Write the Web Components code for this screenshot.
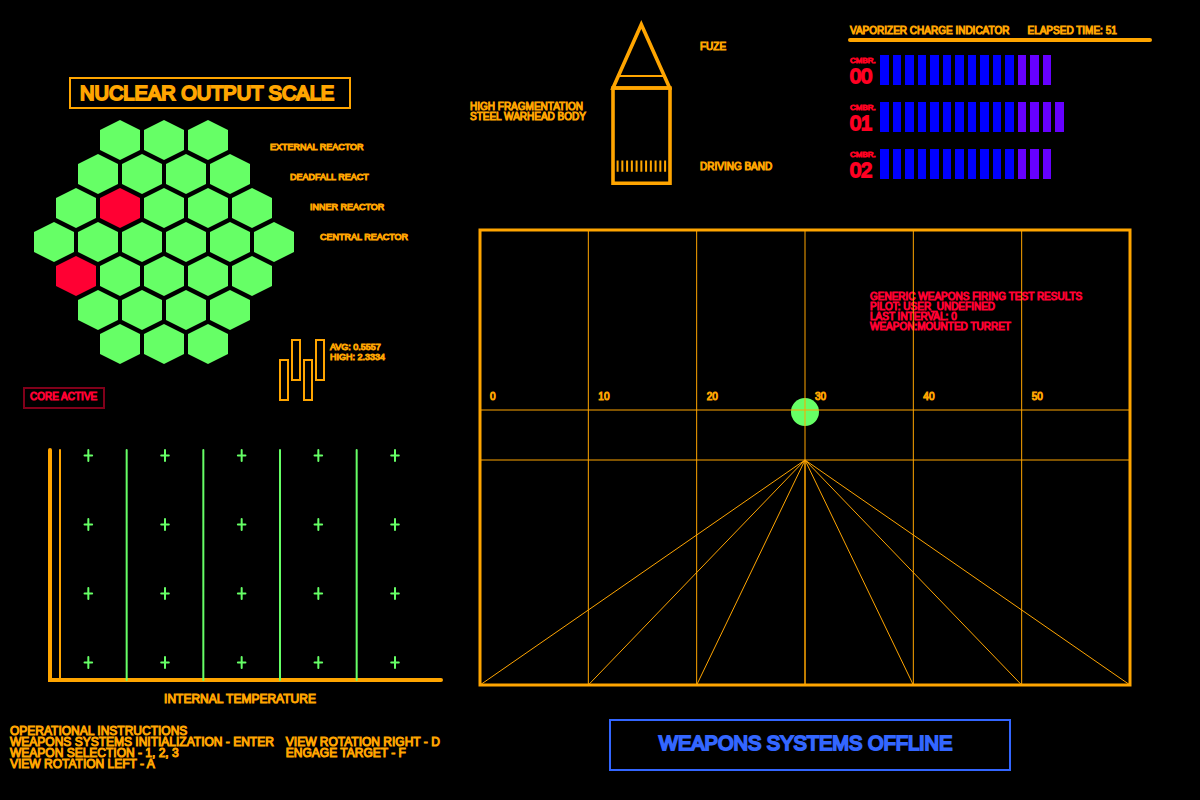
<!DOCTYPE html>
<html lang="en">
<head>
<meta charset="utf-8">
<title>Weapons Console</title>
<style>
  body { margin: 0; background: #000; }
</style>
</head>
<body>
<weapons-console></weapons-console>
<script>
const amber = '#ffa500', green = '#66ff66', red = '#ff0033', blue = '#3366ff';

function define(name, html, setup) {
  const template = document.createElement('template');
  template.innerHTML = html;
  customElements.define(name, class extends HTMLElement {
    constructor() {
      super();
      this.attachShadow({ mode: 'open' }).append(template.content.cloneNode(true));
    }
    connectedCallback() {
      if (setup && !this.ready) { this.ready = true; setup(this, this.shadowRoot); }
    }
  });
}

define('framed-title', `
  <style>
    :host { display: block; box-sizing: border-box; border: 2px solid currentColor; -webkit-text-stroke: 2px currentColor; }
    ::slotted(*) { margin: 0; font-size: 20px; line-height: 24px; font-weight: normal; }
  </style>
  <slot></slot>`);

define('reactor-cells', `
  <style>
    :host { display: flex; flex-direction: column; align-items: center; }
    .row { display: flex; gap: 4px; }
    .row + .row { margin-top: -6px; }
    i { width: 40px; height: 40px; background: ${green};
        clip-path: polygon(50% 0, 100% 25%, 100% 75%, 50% 100%, 0 75%, 0 25%); }
    i.hot { background: ${red}; }
  </style>`, (host, root) => {
  const hot = host.getAttribute('hot').split(' ');
  [3, 4, 5, 6, 5, 4, 3].forEach((count, r) => {
    const row = document.createElement('div');
    row.className = 'row';
    for (let c = 0; c < count; c++) {
      const cell = document.createElement('i');
      if (hot.includes(r + '-' + c)) cell.className = 'hot';
      row.append(cell);
    }
    root.append(row);
  });
});

define('level-bars', `
  <style>
    :host { display: flex; gap: 2px; }
    i { box-sizing: border-box; width: 10px; height: 42px; border: 2px solid ${amber}; }
    i:nth-of-type(odd) { margin-top: 20px; }
  </style>
  <i></i><i></i><i></i><i></i>`);

define('reactor-panel', `
  <style>
    :host { display: block; color: ${amber}; }
    framed-title { width: 282px; margin-left: 69px; padding: 2px 9px; }
    .map { display: flex; margin: 11px 0 0 34px; }
    ul { list-style: none; margin: 12px 0 0 -24px; padding: 0; font-size: 9px; line-height: 30px; z-index: 1; }
    li:nth-child(2) { padding-left: 20px; }
    li:nth-child(3) { padding-left: 40px; }
    li:nth-child(4) { padding-left: 50px; }
    .foot { display: flex; justify-content: space-between; align-items: flex-end; margin: -25px 50px 0 23px; }
    .core { box-sizing: border-box; width: 82px; height: 22px; padding-left: 5px; margin-bottom: -8px;
            border: 2px solid #80001a; color: ${red}; font-size: 10px; line-height: 16px; }
    .levels { display: flex; gap: 5px; width: 121px; font-size: 9px; line-height: 10px; }
    .levels p { margin: 3px 0 0; white-space: nowrap; }
  </style>
  <framed-title><h1>NUCLEAR OUTPUT SCALE</h1></framed-title>
  <div class="map">
    <reactor-cells hot="2-1 4-0"></reactor-cells>
    <ul><li>EXTERNAL REACTOR</li><li>DEADFALL REACT</li><li>INNER REACTOR</li><li>CENTRAL REACTOR</li></ul>
  </div>
  <div class="foot">
    <div class="core">CORE ACTIVE</div>
    <div class="levels"><level-bars></level-bars><p>AVG: 0.5557<br>HIGH: 2.3334</p></div>
  </div>`);

define('temperature-chart', `
  <style>
    :host { display: block; color: ${amber}; }
    svg { display: block; width: 100%; }
    h2 { margin: 9px 12px 0 0; text-align: center; font-size: 12px; line-height: 16px; font-weight: normal; }
  </style>
  <svg viewBox="0 0 400 236" fill="none" stroke-linecap="round" aria-hidden="true">
    <g stroke="${amber}"><path d="M4 4V234H395" stroke-width="4"/><path d="M14 4V234" stroke-width="2"/></g>
    <g id="grid" stroke="${green}" stroke-width="2"></g>
  </svg>
  <h2>INTERNAL TEMPERATURE</h2>`, (host, root) => {
  const step = 230 / 3;
  let d = '';
  for (let c = 0; c < 5; c++) {
    if (c) d += `M${4 + c * step} 4V234`;
    for (let r = 0; r < 4; r++) {
      const x = 4 + (c + .5) * step, y = 9.6 + r * 69;
      d += `M${x} ${y - 5.5}v11M${x - 3.8} ${y}h7.6`;
    }
  }
  root.getElementById('grid').innerHTML = `<path d="${d}"/>`;
});

define('operator-help', `
  <style>
    :host { display: block; color: ${amber}; font-size: 12px; line-height: 11px; white-space: nowrap; }
    h2 { margin: 0; font: inherit; }
    div { display: flex; gap: 12px; }
    p { margin: 0; }
  </style>
  <h2>OPERATIONAL INSTRUCTIONS</h2>
  <div>
    <p>WEAPONS SYSTEMS INITIALIZATION - ENTER<br>WEAPON SELECTION - 1, 2, 3<br>VIEW ROTATION LEFT - A</p>
    <p>VIEW ROTATION RIGHT - D<br>ENGAGE TARGET - F</p>
  </div>`);

define('warhead-diagram', `
  <style>
    :host { display: flex; color: ${amber}; font-size: 10px; line-height: 10px; white-space: nowrap; }
    p { margin: 0; }
    .body { width: 140px; padding-top: 82px; }
    svg { display: block; width: 62px; height: 166px; }
    .right { display: flex; flex-direction: column; gap: 110px; padding: 22px 0 0 28px; }
  </style>
  <p class="body">HIGH FRAGMENTATION<br>STEEL WARHEAD BODY</p>
  <svg viewBox="610 20 62 166" fill="none" stroke="${amber}" aria-hidden="true">
    <path d="M613 88H670V183.300H613Z" stroke-width="3.600"/>
    <path d="M613 88L641.300 24.500L669.700 88Z" stroke-width="3.600"/>
    <path d="M619 76H664" stroke-width="2"/>
    <path id="ticks" stroke-width="2"/>
  </svg>
  <div class="right"><p>FUZE</p><p>DRIVING BAND</p></div>`, (host, root) => {
  let d = '';
  for (let i = 0; i < 11; i++) d += `M${617.6 + i * 4.75} 160.500V171.800`;
  root.getElementById('ticks').setAttribute('d', d);
});

define('charge-row', `
  <style>
    :host { display: flex; color: #ff0022; }
    .name { width: 30px; padding-left: 2px; }
    small { display: block; font-size: 8px; line-height: 12px; }
    b { display: block; font-size: 20px; line-height: 18px; font-weight: normal; -webkit-text-stroke-width: 2px; }
    .bars { flex: 1; display: grid; grid-template-columns: repeat(24, 1fr); gap: 4px; height: 30px; }
    i { background: #0000ff; }
    i:nth-child(n+12) { background: #6600ff; }
  </style>
  <div class="name"><small>CMBR.</small><b><slot></slot></b></div>
  <div class="bars"></div>`, (host, root) => {
  root.querySelector('.bars').innerHTML = '<i></i>'.repeat(+host.getAttribute('charge'));
});

define('charge-panel', `
  <style>
    :host { display: block; }
    header { display: flex; gap: 18px; padding: 0 0 2px 2px; color: ${amber}; font-size: 10px; line-height: 10px; white-space: nowrap; }
    h2, p { margin: 0; font: inherit; }
    hr { width: 304px; height: 4px; margin: 0; border: 0; border-radius: 2px; background: ${amber}; }
    .rows { display: flex; flex-direction: column; gap: 17px; margin: 13px 0 0; }
  </style>
  <header><h2>VAPORIZER CHARGE INDICATOR</h2><p>ELAPSED TIME: 51</p></header>
  <hr>
  <div class="rows">
    <charge-row charge="14">00</charge-row>
    <charge-row charge="15">01</charge-row>
    <charge-row charge="14">02</charge-row>
  </div>`);

define('firing-view', `
  <style>
    :host { display: grid; color: ${amber}; font-size: 10px; line-height: 10px; }
    svg, .text { grid-area: 1 / 1; }
    svg { display: block; width: 100%; overflow: visible; z-index: 1; }
    .text { padding: 64px 2px 0; z-index: 0; }
    .report { margin: 0 0 60px 60%; color: ${red}; white-space: nowrap; }
    .scale { display: grid; grid-template-columns: repeat(6, 1fr); }
    .scale span { padding-left: 10px; }
  </style>
  <div class="text">
    <p class="report">GENERIC WEAPONS FIRING TEST RESULTS<br>PILOT: USER_UNDEFINED<br>LAST INTERVAL: 0<br>WEAPON:MOUNTED TURRET</p>
    <div class="scale"><span>0</span><span>10</span><span>20</span><span>30</span><span>40</span><span>50</span></div>
  </div>
  <svg viewBox="478 228 654 459" fill="none" stroke="${amber}" aria-hidden="true">
    <circle cx="805" cy="412" r="14" fill="${green}" stroke="none"/>
    <rect x="480" y="230" width="650" height="455" stroke-width="3"/>
    <path d="M480 410H1130M480 460H1130"/>
    <g id="lines"></g>
  </svg>`, (host, root) => {
  let s = '';
  for (let i = 0; i < 7; i++) {
    const x = 480 + i * 650 / 6;
    if (i > 0 && i < 6) s += `<path d="M${x} 230V685"/>`;
    s += `<path d="M805 460L${x} 685"/>`;
  }
  root.getElementById('lines').innerHTML = s;
});

define('weapons-console', `
  <style>
    :host { display: grid; grid-template-columns: 45fr 73fr; column-gap: 20px; box-sizing: border-box;
            min-height: 100vh; font-family: Arial, "Liberation Sans", sans-serif;
            -webkit-text-stroke: 1px currentColor; }
    .left { padding-top: 77px; }
    temperature-chart { margin: 45px 4px 0 46px; }
    operator-help { margin: 19px 0 0 10px; }
    .right { padding: 20px 0 29px; }
    .top { display: flex; }
    warhead-diagram { width: 370px; }
    charge-panel { flex: 1; margin: 6px 24px 0 8px; }
    firing-view { margin: 42px 68px 0 8px; }
    .state { width: 402px; margin: 32px 0 0 139px; padding: 10px 48px 14px; color: ${blue}; }
  </style>
  <section class="left">
    <reactor-panel></reactor-panel>
    <temperature-chart></temperature-chart>
    <operator-help></operator-help>
  </section>
  <section class="right">
    <div class="top">
      <warhead-diagram></warhead-diagram>
      <charge-panel></charge-panel>
    </div>
    <firing-view></firing-view>
    <framed-title class="state" role="status"><p>WEAPONS SYSTEMS OFFLINE</p></framed-title>
  </section>`);
</script>
</body>
</html>
